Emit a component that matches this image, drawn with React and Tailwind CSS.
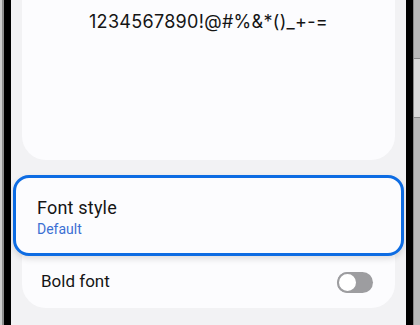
import React from 'react';

const FONT = { fontFamily: 'Roboto, "Noto Sans", sans-serif' };
const WIDE = { fontFamily: 'Inter, Roboto, sans-serif' };

function Toggle() {
  return (
    <div className="relative w-[36px] h-[21px] rounded-full bg-[#9d9da0]">
      <div className="absolute left-0 top-0 w-[21px] h-[21px] rounded-full bg-white border-[2px] border-[#9d9da0]" />
    </div>
  );
}

export default function App() {
  return (
    <div className="w-[420px] h-[325px] overflow-hidden flex bg-[#d6d6d6]" style={FONT}>
      {/* left frame */}
      <div className="w-[2px] bg-[#cfcfcf]" />
      <div className="w-[2px] bg-[#8f8f8f]" />
      <div className="w-[7px] bg-black" />

      {/* screen */}
      <div className="flex-1 flex flex-col bg-[#f2f2f4] px-[11px]">
        <div className="-mt-[20px] h-[180px] rounded-b-[24px] bg-[#fcfcfe] flex justify-center pt-[31px]">
          <span className="text-[18px] leading-[22px] text-[#151515] tracking-[0.3px]" style={WIDE}>
            1234567890!@#%&amp;*()_+-=
          </span>
        </div>

        <div className="mt-[15px] rounded-[24px] bg-[#fcfcfe] flex flex-col">
          <div className="-mx-[9px] h-[81px] rounded-[16px] border-[3px] border-[#0d6ce3] bg-[#fcfcfe] shadow-[0_3px_6px_rgba(0,0,0,0.12)] flex flex-col justify-center pl-[21px] pt-[2px]">
            <span className="text-[18px] leading-[24px] text-[#151515] tracking-[0.2px]">Font style</span>
            <span className="text-[14px] leading-[18px] text-[#3b6fd3]">Default</span>
          </div>
          <div className="h-[52px] flex items-center justify-between pl-[19px] pr-[22px]">
            <span className="text-[17px] text-[#151515]">Bold font</span>
            <Toggle />
          </div>
        </div>
      </div>

      {/* right frame */}
      <div className="w-[7px] bg-black" />
      <div className="w-[7px] flex flex-col bg-[#b9b9b9] border-l border-[#8a8a8a]">
        <div className="h-[58px]" />
        <div className="h-[60px] bg-[#d9d9d9] border-y border-[#8a8a8a]" />
      </div>
    </div>
  );
}
